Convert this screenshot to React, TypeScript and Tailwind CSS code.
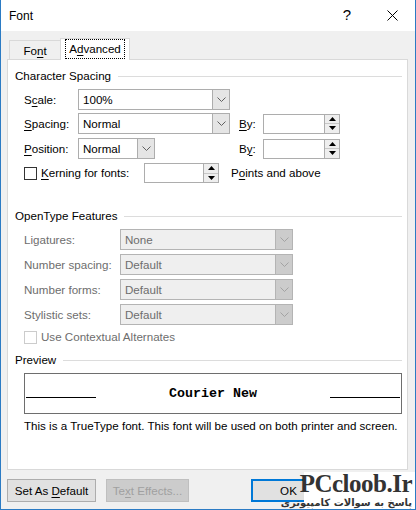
import React from "react";

const Acc = ({ children }: { children: React.ReactNode }) => (
  <span className="underline decoration-1 underline-offset-[2px]">{children}</span>
);

const Chevron = ({ color }: { color: string }) => (
  <svg width="9" height="5" viewBox="0 0 9 5" fill="none">
    <path d="M0.5 0.5 L4.5 4.5 L8.5 0.5" stroke={color} strokeWidth="1" />
  </svg>
);

function Combo({ value, w, disabled }: { value: string; w: string; disabled?: boolean }) {
  return (
    <div
      className={`flex h-[21px] border ${w} ${
        disabled ? "border-[#b4b4b4] bg-[#efefef] text-[#6d6d6d]" : "border-[#adadad] bg-white"
      }`}
    >
      <div className="flex flex-1 items-center pl-[4px]">{value}</div>
      <div
        className={`flex w-[17px] items-center justify-center border-l ${
          disabled ? "border-[#b4b4b4] bg-[#cccccc]" : "border-[#adadad] bg-[#e5e5e5]"
        }`}
      >
        <Chevron color={disabled ? "#a3a3a3" : "#606060"} />
      </div>
    </div>
  );
}

function Spin({ w }: { w: string }) {
  return (
    <div className={`flex h-[20px] border border-[#adadad] bg-white ${w}`}>
      <div className="flex-1" />
      <div className="flex w-[15px] flex-col border-l border-[#adadad] bg-[#eeeeee]">
        <div className="flex flex-1 items-center justify-center border-b border-[#c8c8c8]">
          <svg width="7" height="4" viewBox="0 0 7 4">
            <path d="M0 4 L3.5 0 L7 4 Z" fill="#000" />
          </svg>
        </div>
        <div className="flex flex-1 items-center justify-center">
          <svg width="7" height="4" viewBox="0 0 7 4">
            <path d="M0 0 L3.5 4 L7 0 Z" fill="#000" />
          </svg>
        </div>
      </div>
    </div>
  );
}

function Heading({ children }: { children: React.ReactNode }) {
  return (
    <div className="flex h-[16px] items-center gap-[7px] pr-[5px]">
      <span>{children}</span>
      <div className="h-px flex-1 bg-[#dcdcdc]" />
    </div>
  );
}

function Check({ disabled }: { disabled?: boolean }) {
  return (
    <div
      className={`h-[13px] w-[13px] border bg-white ${
        disabled ? "border-[#cccccc]" : "border-[#333333]"
      }`}
    />
  );
}

export default function App() {
  return (
    <div className="relative flex h-[510px] w-[416px] flex-col border-x border-b border-[#2b7bc4] bg-[#f0f0f0] font-['Liberation_Sans',Arial,sans-serif] text-[11.6px] text-black">
      {/* title bar */}
      <div className="flex h-[31px] shrink-0 items-center bg-white pl-[8px] text-[12px]">
        <span>Font</span>
        <span className="ml-auto w-[20px] text-center text-[15px]">?</span>
        <svg className="ml-[30px] mr-[17px]" width="11" height="11" viewBox="0 0 11 11">
          <path d="M0.5 0.5 L10.5 10.5 M10.5 0.5 L0.5 10.5" stroke="#000" strokeWidth="1" />
        </svg>
      </div>

      <div className="flex flex-1 flex-col pl-[6px] pr-[7px]">
        {/* tabs */}
        <div className="relative z-10 -mb-px flex h-[29px] items-end pl-[2px]">
          <div className="flex h-[20px] w-[51px] items-center justify-center border-l border-t border-[#d9d9d9] pt-[1px]">
            Fo<Acc>n</Acc>t
          </div>
          <div className="flex h-[22px] w-[70px] items-center justify-center border-x border-t border-[#d9d9d9] bg-white pb-[1px]">
            <span className="border border-dotted border-black px-[3px]">
              A<Acc>d</Acc>vanced
            </span>
          </div>
        </div>

        {/* panel */}
        <div className="flex h-[411px] flex-col border border-[#d9d9d9] bg-white pl-[7px] pt-[8px]">
          <Heading>Character Spacing</Heading>

          <div className="flex flex-col pl-[9px]">
            <div className="mt-[5px] flex items-center">
              <span className="w-[54px]">
                S<Acc>c</Acc>ale:
              </span>
              <Combo value="100%" w="w-[152px]" />
            </div>
            <div className="mt-[3px] flex items-center">
              <span className="w-[54px]">
                <Acc>S</Acc>pacing:
              </span>
              <Combo value="Normal" w="w-[152px]" />
              <span className="ml-[9px] w-[24px]">
                <Acc>B</Acc>y:
              </span>
              <Spin w="w-[77px]" />
            </div>
            <div className="mt-[4px] flex items-center">
              <span className="w-[54px]">
                <Acc>P</Acc>osition:
              </span>
              <div className="w-[152px]">
                <Combo value="Normal" w="w-[77px]" />
              </div>
              <span className="ml-[9px] w-[24px]">
                B<Acc>y</Acc>:
              </span>
              <Spin w="w-[77px]" />
            </div>
            <div className="mt-[4px] flex items-center">
              <Check />
              <span className="ml-[4px] w-[103px]">
                <Acc>K</Acc>erning for fonts:
              </span>
              <Spin w="w-[75px]" />
              <span className="ml-[12px]">
                P<Acc>o</Acc>ints and above
              </span>
            </div>
          </div>

          <div className="mt-[25px]">
            <Heading>OpenType Features</Heading>
          </div>

          <div className="flex flex-col pl-[9px] text-[#6d6d6d]">
            <div className="mt-[5px] flex items-center">
              <span className="w-[96px]">Ligatures:</span>
              <Combo value="None" w="w-[173px]" disabled />
            </div>
            <div className="mt-[4px] flex items-center">
              <span className="w-[96px]">Number spacing:</span>
              <Combo value="Default" w="w-[173px]" disabled />
            </div>
            <div className="mt-[4px] flex items-center">
              <span className="w-[96px]">Number forms:</span>
              <Combo value="Default" w="w-[173px]" disabled />
            </div>
            <div className="mt-[4px] flex items-center">
              <span className="w-[96px]">Stylistic sets:</span>
              <Combo value="Default" w="w-[173px]" disabled />
            </div>
            <div className="mt-[4px] flex h-[16px] items-center">
              <Check disabled />
              <span className="ml-[4px]">Use Contextual Alternates</span>
            </div>
          </div>

          <div className="mt-[7px]">
            <Heading>Preview</Heading>
          </div>

          <div className="pl-[9px] pr-[5px]">
            <div className="mt-[5px] flex h-[41px] items-center justify-between border border-[#6e6e6e] px-px">
              <div className="mt-[8px] h-px w-[70px] bg-black" />
              <span className="font-['Liberation_Mono','Courier_New',monospace] text-[13.3px] font-bold">
                Courier New
              </span>
              <div className="mt-[8px] h-px w-[70px] bg-black" />
            </div>
            <p className="mt-[3px] whitespace-nowrap">
              This is a TrueType font. This font will be used on both printer and screen.
            </p>
          </div>
        </div>

        {/* buttons */}
        <div className="mt-[9px] flex items-center">
          <button className="h-[23px] w-[89px] border border-[#adadad] bg-[#e1e1e1]">
            Set As <Acc>D</Acc>efault
          </button>
          <button className="ml-[10px] h-[23px] w-[83px] border border-[#bfbfbf] bg-[#cccccc] text-[#a0a0a0]">
            Te<span className="underline decoration-1 underline-offset-[2px]">x</span>t Effects...
          </button>
          <button className="ml-[62px] h-[23px] w-[75px] border-2 border-[#0078d7] bg-[#e1e1e1]">
            OK
          </button>
        </div>
      </div>

      {/* watermark */}
      <div className="absolute bottom-0 right-0 flex w-[111px] flex-col items-end bg-white pr-[3px]">
        <span className="font-['Liberation_Serif',serif] text-[25px] font-bold leading-[24px] tracking-[-0.5px] text-[#333333]">
          PCcloob.Ir
        </span>
        <span
          dir="rtl"
          className="whitespace-nowrap font-['DejaVu_Sans',sans-serif] text-[10px] font-bold leading-[13px] text-[#333333]"
        >
          پاسخ به سوالات کامپیوتری
        </span>
      </div>
    </div>
  );
}
